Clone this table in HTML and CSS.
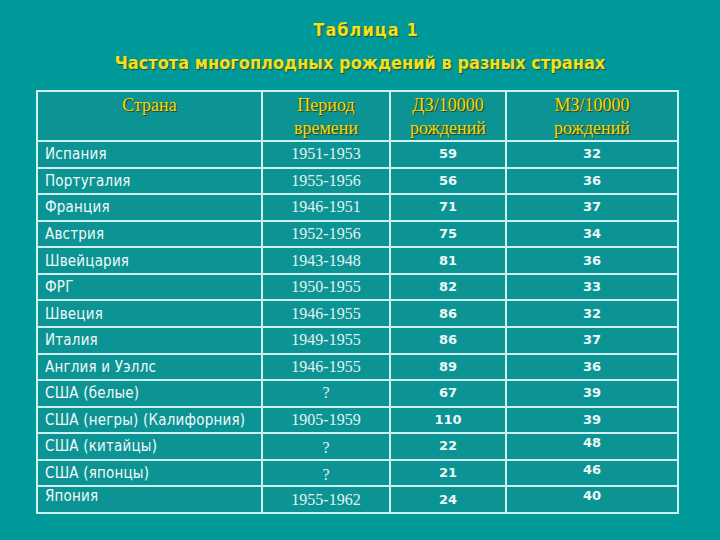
FILE: index.html
```html
<!DOCTYPE html>
<html lang="ru">
<head>
<meta charset="utf-8">
<link rel="stylesheet" href="styles.css">
</head>
<body>
<div class="slide">
  <h1 class="title">Таблица 1</h1>
  <h2 class="subtitle">Частота многоплодных рождений в разных странах</h2>
  <table class="data">
    <colgroup>
      <col class="c1"><col class="c2"><col class="c3"><col class="c4">
    </colgroup>
    <thead>
      <tr class="head">
        <th>Страна</th>
        <th>Период<br>времени</th>
        <th>ДЗ/10000<br>рождений</th>
        <th>МЗ/10000<br>рождений</th>
      </tr>
    </thead>
    <tbody>
      <tr><td class="name">Испания</td><td class="yr">1951-1953</td><td class="num">59</td><td class="num">32</td></tr>
      <tr><td class="name">Португалия</td><td class="yr">1955-1956</td><td class="num">56</td><td class="num">36</td></tr>
      <tr><td class="name">Франция</td><td class="yr">1946-1951</td><td class="num">71</td><td class="num">37</td></tr>
      <tr><td class="name">Австрия</td><td class="yr">1952-1956</td><td class="num">75</td><td class="num">34</td></tr>
      <tr><td class="name">Швейцария</td><td class="yr">1943-1948</td><td class="num">81</td><td class="num">36</td></tr>
      <tr><td class="name">ФРГ</td><td class="yr">1950-1955</td><td class="num">82</td><td class="num">33</td></tr>
      <tr><td class="name">Швеция</td><td class="yr">1946-1955</td><td class="num">86</td><td class="num">32</td></tr>
      <tr><td class="name">Италия</td><td class="yr">1949-1955</td><td class="num">86</td><td class="num">37</td></tr>
      <tr><td class="name">Англия и Уэллс</td><td class="yr">1946-1955</td><td class="num">89</td><td class="num">36</td></tr>
      <tr><td class="name">США (белые)</td><td class="yr">?</td><td class="num">67</td><td class="num">39</td></tr>
      <tr><td class="name">США (негры) (Калифорния)</td><td class="yr">1905-1959</td><td class="num">110</td><td class="num">39</td></tr>
      <tr><td class="name">США (китайцы)</td><td class="yr low">?</td><td class="num">22</td><td class="num high">48</td></tr>
      <tr><td class="name">США (японцы)</td><td class="yr low">?</td><td class="num">21</td><td class="num high">46</td></tr>
      <tr><td class="name high">Япония</td><td class="yr">1955-1962</td><td class="num">24</td><td class="num high">40</td></tr>
    </tbody>
  </table>
</div>
</body>
</html>
```

FILE: styles.css
```css
html, body {
  margin: 0;
  padding: 0;
  background: #009999;
}

.slide {
  width: 720px;
  height: 540px;
  background: #009999;
  display: flex;
  flex-direction: column;
  align-items: center;
  overflow: hidden;
}

.title,
.subtitle {
  margin: 0;
  font-family: "DejaVu Sans Condensed", "DejaVu Sans", sans-serif;
  font-weight: bold;
  font-size: 18px;
  line-height: 22px;
  color: #f0e020;
  text-shadow: 1px 1px 1px #2a4a30;
  text-align: center;
}

.title {
  margin-top: 19px;
  padding-left: 12px;
  letter-spacing: 1px;
}

.subtitle {
  margin-top: 11px;
}

.data {
  align-self: flex-start;
  margin-left: 36px;
  margin-top: 16px;
  width: 641px;
  border-collapse: collapse;
  table-layout: fixed;
  border: 2px solid #dcf6f6;
  background: #0c9494;
}

.c1 { width: 225px; }
.c2 { width: 128px; }
.c3 { width: 116px; }
.c4 { width: 172px; }

.data th,
.data td {
  border: 2px solid #cdf0f0;
  padding: 0;
  line-height: 18px;
}

.head {
  height: 50px;
}

.data tbody tr {
  height: 26.57px;
}

.data th {
  font-family: "Liberation Serif", serif;
  font-weight: normal;
  font-size: 18px;
  line-height: 23px;
  color: #e8de1c;
  text-shadow: 1px 1px 1px #2a3a20, 0 0 1px #6a6a10;
  text-align: center;
  vertical-align: top;
  padding-top: 2px;
}

.data td {
  vertical-align: middle;
}

.name {
  font-family: "DejaVu Sans Condensed", "DejaVu Sans", sans-serif;
  font-size: 15px;
  color: #f2fafa;
  padding-left: 7px !important;
  white-space: nowrap;
  letter-spacing: 0.2px;
}

.yr {
  font-family: "Liberation Serif", serif;
  font-size: 16px;
  color: #e4f2f2;
  text-align: center;
}

.num {
  font-family: "DejaVu Sans", sans-serif;
  font-weight: bold;
  font-size: 13px;
  color: #eef8f8;
  text-align: center;
}

.low {
  padding-top: 4px !important;
}

.high {
  vertical-align: top !important;
  line-height: 16px !important;
  padding-top: 1px !important;
}
```
